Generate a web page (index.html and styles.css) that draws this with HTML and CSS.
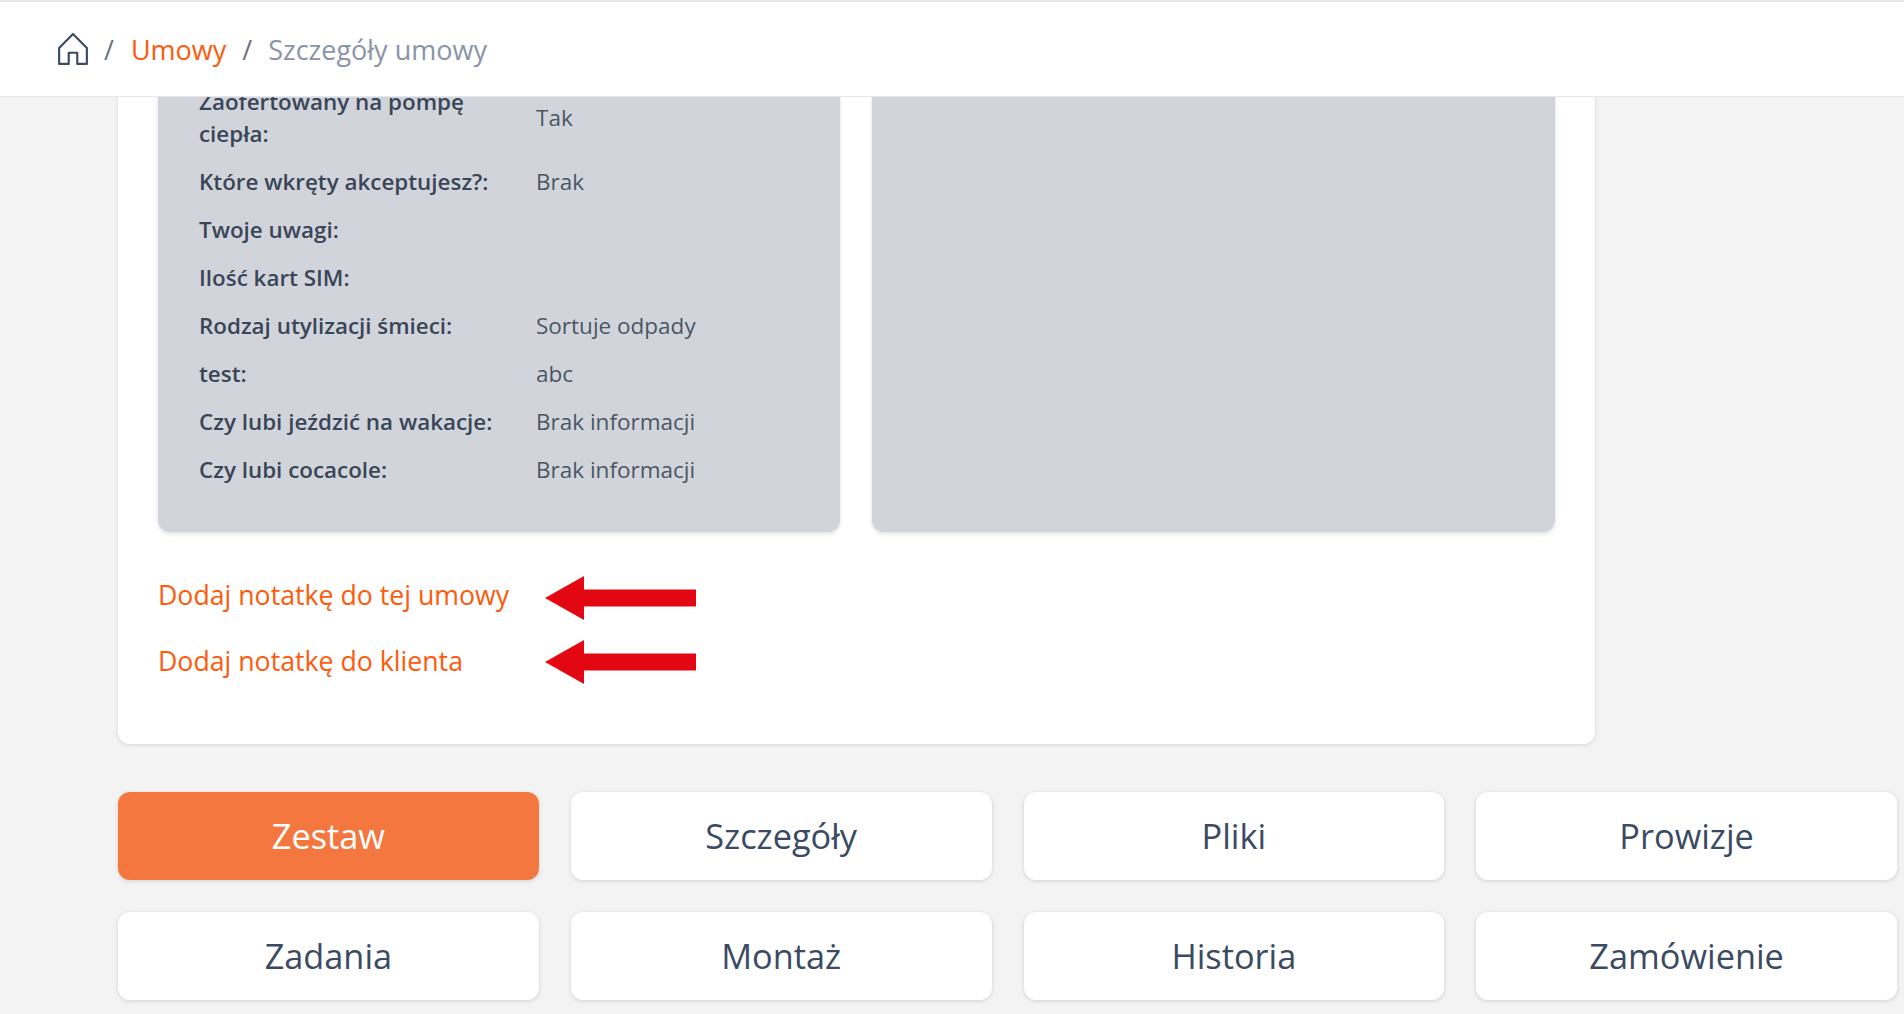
FILE: index.html
```html
<!DOCTYPE html>
<html lang="pl">
<head>
<meta charset="utf-8">
<title>Szczegóły umowy</title>
<link rel="stylesheet" href="styles.css">
</head>
<body>
<header class="topbar">
  <nav class="crumbs">
    <svg class="home" viewBox="0 0 28 30" fill="none" stroke="#3b4a63" stroke-width="2" stroke-linejoin="round" stroke-linecap="round"><path d="M1 14 14 1l13 13v15h-9V18.500h-8V29H1z"/></svg>
    <span class="sep">/</span>
    <a class="crumb-link">Umowy</a>
    <span class="sep">/</span>
    <span class="crumb-current">Szczegóły umowy</span>
  </nav>
</header>
<main class="content">
  <section class="card">
    <div class="panels">
      <div class="panel">
        <div class="row"><span class="label">Zaofertowany na pompę ciepła:</span><span class="value">Tak</span></div>
        <div class="row"><span class="label">Które wkręty akceptujesz?:</span><span class="value">Brak</span></div>
        <div class="row"><span class="label">Twoje uwagi:</span><span class="value"></span></div>
        <div class="row"><span class="label">Ilość kart SIM:</span><span class="value"></span></div>
        <div class="row"><span class="label">Rodzaj utylizacji śmieci:</span><span class="value">Sortuje odpady</span></div>
        <div class="row"><span class="label">test:</span><span class="value">abc</span></div>
        <div class="row"><span class="label">Czy lubi jeździć na wakacje:</span><span class="value">Brak informacji</span></div>
        <div class="row"><span class="label">Czy lubi cocacole:</span><span class="value">Brak informacji</span></div>
      </div>
      <div class="panel"></div>
    </div>
    <div class="notes">
      <a class="note">Dodaj notatkę do tej umowy</a>
      <svg class="arrow" viewBox="0 0 151 44"><path d="M0 22 39 0v13.500h112v17H39V44z"/></svg>
      <a class="note note-client">Dodaj notatkę do klienta</a>
      <svg class="arrow" viewBox="0 0 151 44"><path d="M0 22 39 0v13.500h112v17H39V44z"/></svg>
    </div>
  </section>
  <div class="tabs">
    <button class="tab active">Zestaw</button>
    <button class="tab">Szczegóły</button>
    <button class="tab">Pliki</button>
    <button class="tab">Prowizje</button>
    <button class="tab">Zadania</button>
    <button class="tab">Montaż</button>
    <button class="tab">Historia</button>
    <button class="tab">Zamówienie</button>
  </div>
</main>
</body>
</html>
```
FILE: styles.css
```css
* { box-sizing: border-box; }
html, body { height: 100%; }
body {
  margin: 0;
  background: #f3f3f3;
  color: #3b4a63;
  font-family: "Open Sans", "Noto Sans", sans-serif;
  overflow: hidden;
  display: flex;
  flex-direction: column;
}
.topbar {
  flex: none;
  height: 97px;
  background: #fff;
  border-top: 2px solid #e5e7eb;
  border-bottom: 1px solid #e5e7eb;
  padding-left: 58px;
  display: flex;
  align-items: center;
  position: relative;
  z-index: 2;
}
.crumbs { display: flex; align-items: center; font-size: 27px; gap: 16px; }
.home { width: 30px; height: 32px; margin-top: -1px; }
.sep { color: #6b7280; }
.crumb-link { color: #ff5a0a; margin-left: 1px; }
.crumb-current { color: #8a94a6; }
.content {
  flex: 1;
  min-height: 0;
  overflow: hidden;
  padding: 0 7px 0 118px;
}
.card {
  width: 1477px;
  height: 690px;
  margin-top: -43px;
  background: #fff;
  border-radius: 0 0 12px 12px;
  box-shadow: 0 1px 4px rgba(0,0,0,.12);
  padding: 0 40px;
}
.panels {
  display: grid;
  grid-template-columns: 682px 683px;
  gap: 32px;
}
.panel {
  background: #d1d5db;
  border-radius: 0 0 12px 12px;
  box-shadow: 0 2px 4px rgba(0,0,0,.12);
  padding: 24px 41px 30px;
  height: 478px;
}
.row {
  display: grid;
  grid-template-columns: 337px 1fr;
  align-items: center;
  padding: 8px 0;
  font-size: 22.500px;
  line-height: 32px;
}
.label { font-weight: 600; color: #3b4558; font-size: 22.400px; }
.value { color: #4b5563; }
.notes {
  display: grid;
  grid-template-columns: 387px 151px;
  row-gap: 20px;
  align-items: start;
  margin-top: 44px;
}
.note { color: #ff5a0a; font-size: 26.700px; line-height: 37px; }
.note-client { margin-top: 2px; }
.arrow { width: 151px; height: 44px; fill: #e30613; display: block; }
.tabs {
  display: grid;
  grid-template-columns: repeat(4, 1fr);
  gap: 32px;
  margin-top: 48px;
}
.tab {
  height: 88px;
  border: 0;
  border-radius: 12px;
  background: #fff;
  color: #3b4a63;
  font-family: inherit;
  font-size: 34.300px;
  padding-bottom: 3px;
  box-shadow: 0 1px 4px rgba(0,0,0,.14);
}
.tab.active { background: #f57740; color: #fff; }
```
